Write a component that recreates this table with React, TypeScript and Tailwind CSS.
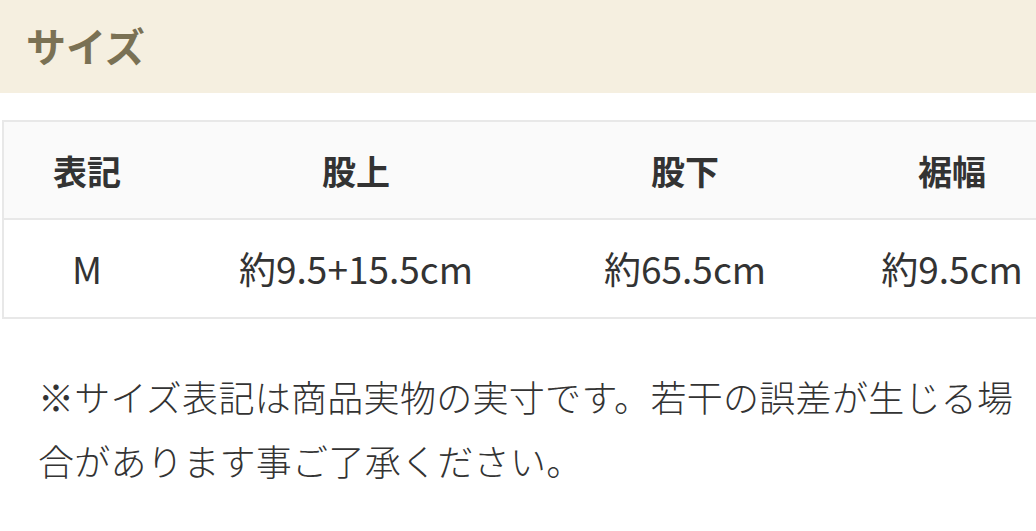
import React from "react";

const font = { fontFamily: '"Noto Sans CJK JP", "Noto Sans", sans-serif' };

export default function App() {
  const heads = ["表記", "股上", "股下", "裾幅"];
  const vals = ["M", "約9.5+15.5cm", "約65.5cm", "約9.5cm"];
  return (
    <div className="w-[1036px] h-[531px] overflow-hidden bg-white text-[#333]" style={font}>
      <div className="h-[93px] bg-[#f5efe0] flex items-center pl-[26px] pb-[4px]">
        <span className="text-[40px] font-bold text-[#7a7154] leading-none">サイズ</span>
      </div>
      <div className="mt-[27px] ml-[2px] w-[1072px] border-t-2 border-l-2 border-[#e8e8e8]">
        <div className="grid grid-cols-[166px_372px_286px_248px] h-[98px] bg-[#fafafa] border-b-2 border-[#e8e8e8] items-center">
          {heads.map((h) => (
            <div key={h} className="text-center text-[34px] font-bold text-[#333]">
              {h}
            </div>
          ))}
        </div>
        <div className="grid grid-cols-[166px_372px_286px_248px] h-[99px] border-b-2 border-[#e8e8e8] items-center">
          {vals.map((v) => (
            <div key={v} className="text-center text-[37px] text-[#333]">
              {v}
            </div>
          ))}
        </div>
      </div>
      <p className="mt-[45px] pl-[38px] pr-[4px] text-[36px] tracking-[0.3px] leading-[64px] font-light text-[#333]">
        ※サイズ表記は商品実物の実寸です。若干の誤差が生じる場合があります事ご了承ください。
      </p>
    </div>
  );
}
